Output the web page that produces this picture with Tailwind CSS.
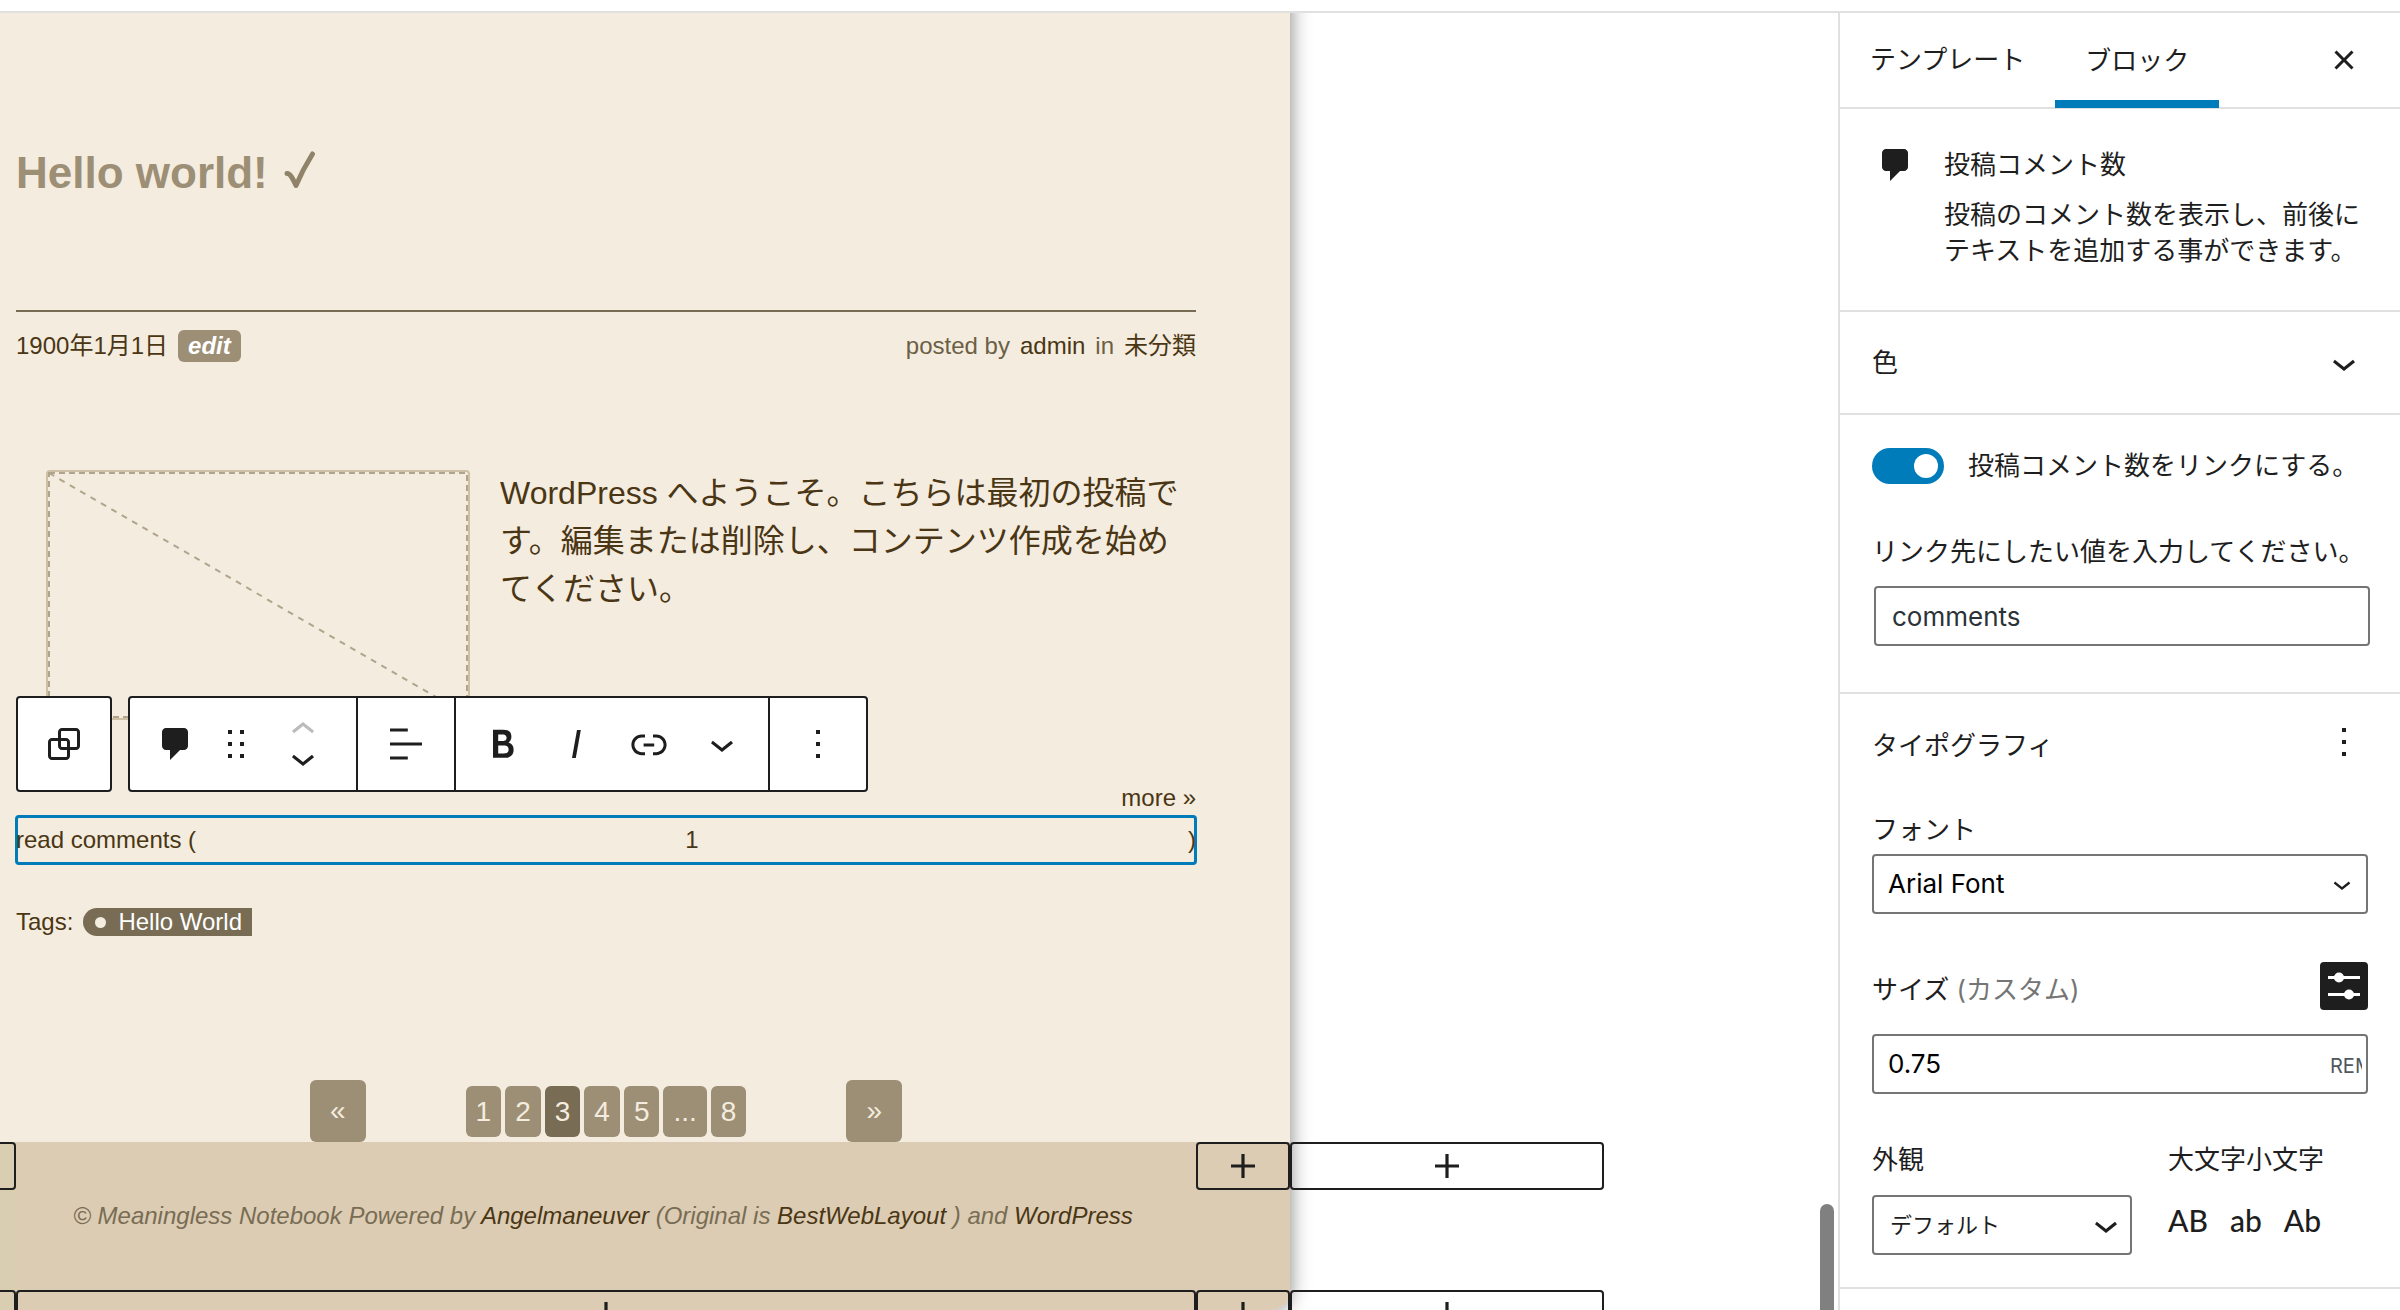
<!DOCTYPE html>
<html lang="ja">
<head>
<meta charset="utf-8">
<title>テンプレートの編集</title>
<script src="https://cdn.jsdelivr.net/npm/@tailwindcss/browser@4"></script>
</head>
<body class="bg-white">
<svg class="hidden" aria-hidden="true">
  <symbol id="comment" viewBox="0 0 20 20"><path d="M5 2h9c1.1 0 2 .9 2 2v7c0 1.1-.9 2-2 2h-2l-5 5v-5H5c-1.1 0-2-.9-2-2V4c0-1.1.9-2 2-2z"/></symbol>
  <symbol id="plus" viewBox="0 0 24 24"><path d="M18 11.2h-5.2V6h-1.6v5.2H6v1.6h5.2V18h1.6v-5.2H18z"/></symbol>
  <symbol id="down" viewBox="0 0 24 24"><path d="M17.5 11.6L12 16l-5.5-4.4.9-1.2L12 14l4.5-3.6 1 1.2z"/></symbol>
  <symbol id="up" viewBox="0 0 24 24"><path d="M6.5 12.4L12 8l5.5 4.4-.9 1.2L12 10l-4.5 3.6-1-1.2z"/></symbol>
  <symbol id="more" viewBox="0 0 24 24"><path d="M13 19h-2v-2h2v2zm0-6h-2v-2h2v2zm0-6h-2V5h2v2z"/></symbol>
</svg>
<div class="flex h-screen flex-col overflow-hidden">
  <header class="h-[13px] shrink-0 border-b-2 border-[#e0e0e0] bg-white"></header>
  <div class="flex min-h-0 flex-1">

    <!-- Editor canvas -->
    <main class="relative flex min-w-0 flex-1 items-start overflow-hidden pr-[548px] font-['Liberation_Sans','Noto_Sans_CJK_JP',sans-serif] text-2xl leading-8 text-[#4a3614]">
      <div class="-mt-5 min-w-0 flex-1 rounded-br-[20px] bg-[#f4ecdf] pt-5 shadow-[0_0_20px_rgb(0_0_0/0.5)]">
        <article class="pr-[94px] pl-4">
          <h1 class="flex items-center gap-4 pt-[130px] text-[44px] leading-[60px] font-bold text-[#9c8f75]">Hello world!
            <svg class="-mt-1 h-10 w-8" viewBox="0 0 32 40" fill="none" stroke="#91836a" stroke-width="5" stroke-linecap="round" stroke-linejoin="round"><path d="M3 22.500C6 22 9 28 12 34.500C16 25 21 15 28.500 3"/></svg>
          </h1>
          <div class="mt-[107px] flex items-center justify-between border-t-2 border-[#786c54] pt-[18px]">
            <div class="flex items-center gap-[10px]"><time>1900年1月1日</time><a href="#" class="rounded-md bg-[#9c8f75] px-[10px] font-bold text-white italic">edit</a></div>
            <div class="flex gap-[10px] text-[#6b5f45]"><span>posted by</span><a href="#" class="text-[#4a3614]">admin</a><span>in</span><a href="#" class="text-[#4a3614]">未分類</a></div>
          </div>
          <div class="mt-[107px] flex pl-[30px]">
            <div class="mt-px h-[250px] w-[424px] shrink-0 rounded border-2 border-[#cdc0a5]">
              <svg class="h-full w-full" viewBox="0 0 420 246" fill="none" stroke="#b0a58c" stroke-width="2"><rect x="1" y="1" width="418" height="244" stroke-dasharray="6 4"/><path d="M1 1L419 243" stroke-dasharray="6 6"/></svg>
            </div>
            <p class="ml-[30px] text-[32px] leading-[48px]">WordPress へようこそ。こちらは最初の投稿です。編集または削除し、コンテンツ作成を始めてください。</p>
          </div>
          <div class="mt-[62px] text-right"><a href="#">more »</a></div>

          <div class="relative mt-px">
            <div class="-mx-px rounded border-[3px] border-[#007cba]">
              <p class="-mx-0.5 flex h-11 items-center justify-between"><span>read comments (</span><span>1</span><span>)</span></p>
            </div>
            <!-- Block toolbar -->
            <div role="toolbar" aria-label="ブロックツール" class="absolute bottom-full left-0 mb-[23px] flex gap-4 text-[#1e1e1e]">
              <button aria-label="親ブロックを選択" class="flex h-24 w-24 items-center justify-center rounded border-2 border-[#1e1e1e] bg-white"><svg class="size-12" viewBox="0 0 24 24" fill="currentColor"><path d="M18 4h-7c-1.100 0-2 .9-2 2v3H6c-1.100 0-2 .9-2 2v7c0 1.100.9 2 2 2h7c1.100 0 2-.9 2-2v-3h3c1.100 0 2-.9 2-2V6c0-1.100-.9-2-2-2zm-4.500 14c0 .3-.2.5-.5.5H6c-.3 0-.5-.2-.5-.5v-7c0-.3.2-.5.5-.5h3V13c0 1.100.9 2 2 2h2.500v3zm0-4.500H11c-.3 0-.5-.2-.5-.5v-2.500H13c.3 0 .5.2.5.5v2.500zm5-.5c0 .3-.2.5-.5.5h-3V11c0-1.100-.9-2-2-2h-2.500V6c0-.3.2-.5.5-.5h7c.3 0 .5.2.5.5v7z"/></svg></button>
              <div class="flex h-24 rounded border-2 border-[#1e1e1e] bg-white">
                <div class="flex w-[228px] items-center border-r-2 border-[#1e1e1e] pl-[26px]">
                  <button aria-label="投稿コメント数" class="mr-4"><svg class="size-10" fill="currentColor"><use href="#comment"/></svg></button>
                  <button aria-label="ドラッグ"><svg class="size-12" viewBox="0 0 24 24" fill="currentColor"><path d="M8 7h2V5H8v2zm0 6h2v-2H8v2zm0 6h2v-2H8v2zm6-14v2h2V5h-2zm0 8h2v-2h-2v2zm0 6h2v-2h-2v2z"/></svg></button>
                  <div class="ml-[19px] flex flex-col">
                    <button aria-label="上に移動" disabled class="h-7 text-[#bbb]"><svg class="-mt-2.5 size-12" fill="currentColor"><use href="#up"/></svg></button>
                    <button aria-label="下に移動" class="h-7"><svg class="-mt-2.5 size-12" fill="currentColor"><use href="#down"/></svg></button>
                  </div>
                </div>
                <button aria-label="配置" class="flex w-[98px] items-center justify-center border-r-2 border-[#1e1e1e]"><svg class="size-12" viewBox="0 0 24 24" fill="currentColor"><path d="M4 19.800h8.900v-1.500H4v1.500zm8.900-15.600H4v1.500h8.900V4.200zm-8.900 7v1.500h16v-1.500H4z"/></svg></button>
                <div class="flex w-[314px] items-center border-r-2 border-[#1e1e1e] pl-[10px]">
                  <button aria-label="太字" class="flex w-[73px] justify-center"><svg class="size-12" viewBox="0 0 24 24" fill="currentColor"><path d="M14.700 11.300c1-.6 1.500-1.600 1.500-3 0-2.300-1.300-3.400-4-3.400H7v14h5.800c1.400 0 2.500-.3 3.300-1 .8-.7 1.200-1.700 1.200-2.900.1-1.900-.8-3.100-2.600-3.700zm-5.100-4h2.300c.6 0 1.100.1 1.400.4.3.3.5.7.5 1.200s-.2 1-.5 1.200c-.3.3-.8.4-1.400.4H9.600V7.300zm4.600 9c-.4.3-1 .4-1.700.4H9.600v-3.900h2.900c.7 0 1.300.2 1.700.5.4.3.6.8.6 1.500s-.2 1.200-.6 1.500z"/></svg></button>
                  <button aria-label="イタリック" class="flex w-[73px] justify-center"><svg class="size-12" viewBox="0 0 24 24" fill="currentColor"><path d="M12.500 5L10 19h1.900l2.500-14z"/></svg></button>
                  <button aria-label="リンク" class="flex w-[73px] justify-center"><svg class="size-12" viewBox="0 0 24 24" fill="currentColor"><path d="M15.600 7.200H14v1.500h1.600c2 0 3.700 1.700 3.700 3.700s-1.700 3.700-3.700 3.700H14v1.500h1.600c2.800 0 5.200-2.300 5.200-5.200 0-2.900-2.300-5.200-5.200-5.200zM4.700 12.400c0-2 1.700-3.700 3.700-3.700H10V7.200H8.400c-2.900 0-5.200 2.300-5.200 5.200 0 2.900 2.300 5.200 5.200 5.200H10v-1.500H8.400c-2 0-3.700-1.700-3.700-3.700zm4.600.9h5.300v-1.500H9.300v1.500z"/></svg></button>
                  <button aria-label="さらに表示" class="flex w-[73px] justify-center"><svg class="size-12" fill="currentColor"><use href="#down"/></svg></button>
                </div>
                <button aria-label="オプション" class="flex w-24 items-center justify-center"><svg class="size-12" fill="currentColor"><use href="#more"/></svg></button>
              </div>
            </div>
          </div>

          <div class="mt-[41px] flex items-center gap-[10px]">
            <span>Tags:</span>
            <a href="#" class="flex h-7 items-center gap-3 rounded-l-[14px] bg-[#786c54] pr-[10px] pl-3 leading-7 text-white"><span class="size-[11px] rounded-full bg-[#f4ecdf]"></span>Hello World</a>
          </div>
          <nav class="mt-[142px] flex items-center justify-center gap-[100px] text-[28px] text-[#f4ecdf]">
            <a href="#" class="rounded-md bg-[#9c8f75] px-5 leading-[62px]">«</a>
            <div class="flex gap-1 leading-[51px]">
              <a href="#" class="rounded-md bg-[#9c8f75] px-[10px]">1</a>
              <a href="#" class="rounded-md bg-[#9c8f75] px-[10px]">2</a>
              <span aria-current="page" class="rounded-md bg-[#786c54] px-[10px]">3</span>
              <a href="#" class="rounded-md bg-[#9c8f75] px-[10px]">4</a>
              <a href="#" class="rounded-md bg-[#9c8f75] px-[10px]">5</a>
              <span class="rounded-md bg-[#9c8f75] px-[10px]">...</span>
              <a href="#" class="rounded-md bg-[#9c8f75] px-[10px]">8</a>
            </div>
            <a href="#" class="rounded-md bg-[#9c8f75] px-5 leading-[62px]">»</a>
          </nav>
        </article>

        <footer class="relative h-[168px] rounded-br-[20px] border-l-[16px] border-[#d9cdb2] bg-[#dcccb3] pt-[58px] pr-[100px] text-center text-[#786c54] italic">
          <p>© Meaningless Notebook Powered by <a href="#" class="text-[#4a3614]">Angelmaneuver</a> (Original is <a href="#" class="text-[#4a3614]">BestWebLayout</a> ) and <a href="#" class="text-[#4a3614]">WordPress</a></p>
          <!-- Block inserters laid over the empty columns -->
          <button aria-label="ブロックを追加" class="absolute top-0 right-full h-12 w-14 rounded border-2 border-[#1e1e1e]"></button>
          <button aria-label="ブロックを追加" class="absolute top-0 right-0 flex h-12 w-[94px] items-center justify-center rounded border-2 border-[#1e1e1e] text-[#1e1e1e]"><svg class="size-12 shrink-0" fill="currentColor"><use href="#plus"/></svg></button>
          <button aria-label="ブロックを追加" class="absolute top-0 left-full flex h-12 w-[314px] items-center justify-center rounded border-2 border-[#1e1e1e] text-[#1e1e1e]"><svg class="size-12 shrink-0" fill="currentColor"><use href="#plus"/></svg></button>
          <button aria-label="ブロックを追加" class="absolute top-[148px] right-full h-12 w-14 rounded border-2 border-[#1e1e1e]"></button>
          <button aria-label="ブロックを追加" class="absolute top-[148px] right-[94px] left-0 flex h-12 items-center justify-center rounded border-2 border-[#1e1e1e] text-[#1e1e1e]"><svg class="size-12 shrink-0" fill="currentColor"><use href="#plus"/></svg></button>
          <button aria-label="ブロックを追加" class="absolute top-[148px] right-0 flex h-12 w-[94px] items-center justify-center rounded border-2 border-[#1e1e1e] text-[#1e1e1e]"><svg class="size-12 shrink-0" fill="currentColor"><use href="#plus"/></svg></button>
          <button aria-label="ブロックを追加" class="absolute top-[148px] left-full flex h-12 w-[314px] items-center justify-center rounded border-2 border-[#1e1e1e] text-[#1e1e1e]"><svg class="size-12 shrink-0" fill="currentColor"><use href="#plus"/></svg></button>
        </footer>
      </div>
      <!-- Scrollbar thumb -->
      <div class="absolute right-1 -bottom-4 h-[122px] w-3.5 rounded-full bg-[#808080]"></div>
    </main>

    <!-- Settings sidebar -->
    <aside class="w-[562px] shrink-0 overflow-hidden border-l-2 border-[#e0e0e0] bg-white font-['Inter','Noto_Sans_CJK_JP',sans-serif] text-[26px] leading-9 text-[#1e1e1e]">
      <div class="flex h-24 border-b-2 border-[#e0e0e0]">
        <button class="px-[30px]">テンプレート</button>
        <button class="-mb-px border-b-8 border-[#007cba] px-[30px] pt-2">ブロック</button>
        <button aria-label="設定を閉じる" class="mr-8 ml-auto"><svg class="size-12" viewBox="0 0 24 24" fill="currentColor"><path d="M12 13.060l3.712 3.713 1.061-1.060L13.061 12l3.712-3.712-1.060-1.060L12 10.938 8.288 7.227l-1.061 1.060L10.939 12l-3.712 3.712 1.060 1.061L12 13.061z"/></svg></button>
      </div>
      <section class="flex h-[203px] gap-7 border-b-2 border-[#e0e0e0] pt-9 pr-8 pl-9">
        <svg class="size-10 shrink-0" fill="currentColor"><use href="#comment"/></svg>
        <div><h2 class="mt-0.5">投稿コメント数</h2><p class="mt-3.5">投稿のコメント数を表示し、前後にテキストを追加する事ができます。</p></div>
      </section>
      <h2 class="border-b-2 border-[#e0e0e0]"><button class="flex h-[101px] w-full items-center justify-between pr-8 pl-8">色<svg class="size-12" fill="currentColor"><use href="#down"/></svg></button></h2>
      <section class="h-[279px] border-b-2 border-[#e0e0e0] px-8 pt-[33px]">
        <label class="flex items-center gap-6"><input type="checkbox" role="switch" checked class="relative h-9 w-[72px] shrink-0 appearance-none rounded-full bg-[#007cba] before:absolute before:top-1.5 before:right-1.5 before:size-6 before:rounded-full before:bg-white"><span class="whitespace-nowrap">投稿コメント数をリンクにする。</span></label>
        <label for="anchor" class="mt-[50px] block whitespace-nowrap">リンク先にしたい値を入力してください。</label>
        <input id="anchor" type="text" value="comments" class="mt-4 ml-0.5 block h-[60px] w-full rounded border-2 border-[#757575] px-4 text-[#2c3338]">
      </section>
      <section class="h-[595px] border-b-2 border-[#e0e0e0] px-8 pt-6">
        <div class="flex items-start justify-between"><h2 class="mt-2.5">タイポグラフィ</h2><button aria-label="タイポグラフィのオプション"><svg class="block size-12" fill="currentColor"><use href="#more"/></svg></button></div>
        <label for="font" class="mt-[46px] block">フォント</label>
        <div class="mt-1.5 grid items-center">
          <select id="font" class="col-start-1 row-start-1 h-[60px] w-full appearance-none rounded border-2 border-[#757575] bg-white px-3.5 text-black"><option>Arial Font</option></select>
          <svg class="pointer-events-none col-start-1 row-start-1 mr-2 size-9 justify-self-end" fill="currentColor"><use href="#down"/></svg>
        </div>
        <div class="mt-12 flex items-center justify-between">
          <label for="size" class="mt-2">サイズ <span class="text-[#757575]">(カスタム)</span></label>
          <button aria-label="プリセットを使用" class="rounded bg-[#1e1e1e]"><svg class="block size-12" viewBox="0 0 48 48" fill="#fff"><path d="M8 14h32v3H8zM8 31h32v3H8z"/><circle cx="19" cy="15.500" r="5"/><circle cx="29" cy="32.500" r="5"/></svg></button>
        </div>
        <div class="mt-6 flex h-[60px] items-center rounded border-2 border-[#757575] pr-1">
          <input id="size" type="text" value="0.75" class="min-w-0 flex-1 px-3.5 text-black">
          <span class="mt-1 w-8 overflow-hidden text-xl text-[#50575e]">REM</span>
        </div>
        <div class="mt-12 flex gap-9">
          <div class="w-[260px]">
            <label for="look" class="block">外観</label>
            <div class="mt-[17px] grid items-center">
              <select id="look" class="col-start-1 row-start-1 h-[60px] w-full appearance-none rounded border-2 border-[#757575] bg-white px-4 text-[22px]"><option>デフォルト</option></select>
              <svg class="pointer-events-none col-start-1 row-start-1 mr-0.5 size-12 justify-self-end" fill="currentColor"><use href="#down"/></svg>
            </div>
          </div>
          <fieldset>
            <legend>大文字小文字</legend>
            <div class="mt-6 flex gap-[22px] font-['Lato',sans-serif] text-[30px] leading-9 font-medium"><button>AB</button><button>ab</button><button>Ab</button></div>
          </fieldset>
        </div>
      </section>
    </aside>
  </div>
</div>
</body>
</html>
